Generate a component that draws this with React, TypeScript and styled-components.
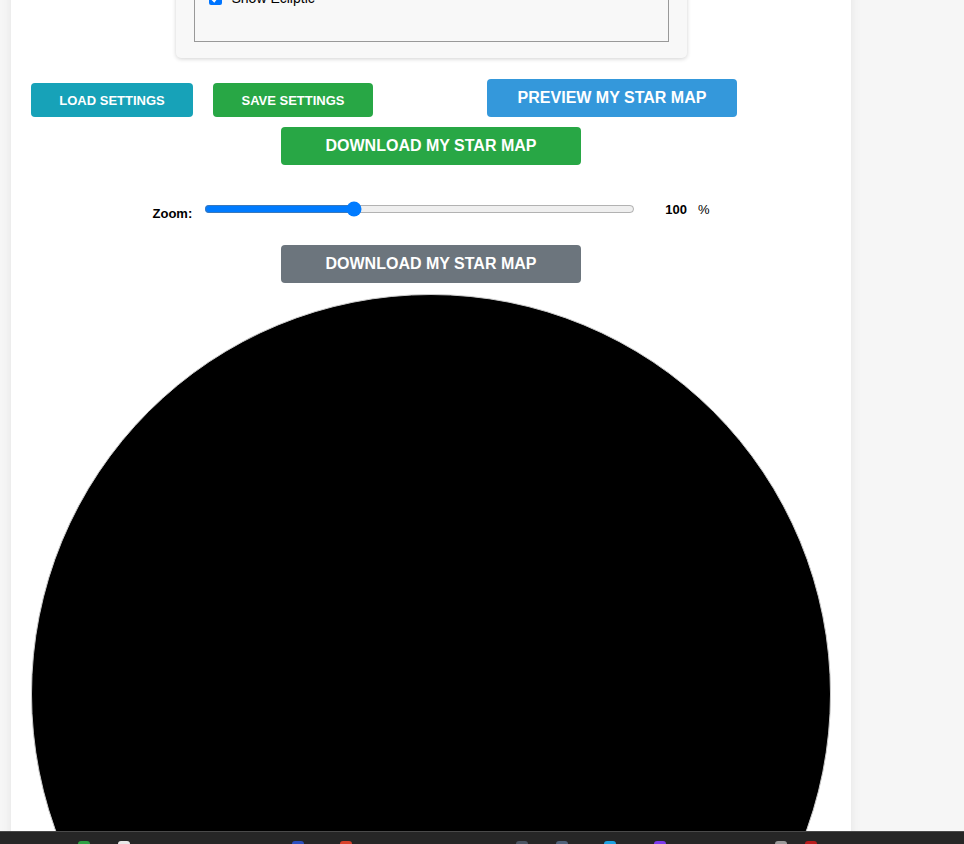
import React, { useState } from "react";
import styled, { createGlobalStyle } from "styled-components";

const GlobalStyle = createGlobalStyle`
  body {
    margin: 0;
    background: #f6f6f6;
    font-family: "Liberation Sans", Arial, sans-serif;
    overflow: hidden;
  }
`;

const Container = styled.div`
  width: 800px;
  margin: -121px 0 0 11px;
  padding: 20px 20px 40px;
  background: #fff;
  box-shadow: 0 0 10px rgba(0, 0, 0, 0.08);
`;

const SettingsPanel = styled.div`
  width: 475px;
  margin: 0 auto 21px;
  padding: 18px 18px 16px;
  background: #f8f8f8;
  border-radius: 5px;
  box-shadow: 0 1px 4px rgba(0, 0, 0, 0.18);
`;

const OptionsBox = styled.div`
  border: 1px solid #999;
  padding: 10px 14px 33px;
`;

const OptionRow = styled.label`
  display: flex;
  align-items: center;
  gap: 10px;
  height: 20px;
  font-size: 14px;
  color: #000;

  input {
    margin: 0;
    width: 13px;
    height: 13px;
    accent-color: #0075ff;
  }
`;

const ButtonRow = styled.div`
  display: flex;
  align-items: flex-end;
  gap: 20px;
`;

const Button = styled.button<{ $bg: string; $w: number; $big?: boolean; $shift?: boolean }>`
  width: ${({ $w }) => $w}px;
  height: ${({ $big }) => ($big ? 38 : 34)}px;
  margin-left: ${({ $shift }) => ($shift ? "94px" : "0")};
  background: ${({ $bg }) => $bg};
  color: #fff;
  border: none;
  border-radius: 4px;
  font-family: "Liberation Sans", Arial, sans-serif;
  font-weight: bold;
  font-size: ${({ $big }) => ($big ? 16 : 13)}px;
  text-transform: uppercase;
  cursor: pointer;
  padding: 0;
`;

const CenterRow = styled.div<{ $top: number }>`
  display: flex;
  justify-content: center;
  margin-top: ${({ $top }) => $top}px;
`;

const ZoomRow = styled.div`
  display: flex;
  justify-content: center;
  align-items: center;
  margin-top: 33px;
  height: 22px;
`;

const ZoomLabel = styled.span`
  font-size: 13px;
  font-weight: bold;
  margin-top: 9px;
  margin-right: 12px;
`;

const Slider = styled.input`
  width: 431px;
  margin: 0;
  accent-color: #007bff;
`;

const ZoomValue = styled.span`
  font-size: 13px;
  font-weight: bold;
  margin-left: 30px;
  padding: 0 6px 0 0;
`;

const Percent = styled.span`
  font-size: 13px;
  margin-left: 5px;
`;

const StarMap = styled.div`
  width: 798px;
  height: 798px;
  margin-top: 11px;
  border: 1px solid #ccc;
  border-radius: 50%;
  background: #000;
`;

const Taskbar = styled.div`
  position: fixed;
  left: 0;
  right: 0;
  bottom: 0;
  height: 12px;
  background: #262626;
  border-top: 1px solid #4a4a4a;
  overflow: hidden;
`;

const TrayIcon = styled.span<{ $x: number; $c: string }>`
  position: absolute;
  left: ${({ $x }) => $x}px;
  top: 9px;
  width: 12px;
  height: 8px;
  border-radius: 3px;
  background: ${({ $c }) => $c};
`;

const trayIcons = [
  { x: 78, c: "#2ea043" },
  { x: 118, c: "#e8e8e8" },
  { x: 292, c: "#2b4fbf" },
  { x: 340, c: "#d9412b" },
  { x: 516, c: "#4b5563" },
  { x: 556, c: "#50627a" },
  { x: 604, c: "#1ba1e2" },
  { x: 654, c: "#7c3aed" },
  { x: 775, c: "#9a9a9a" },
  { x: 805, c: "#b91c1c" },
];

const App = () => {
  const [zoom, setZoom] = useState(100);

  return (
    <>
      <GlobalStyle />
      <Container>
        <SettingsPanel>
          <OptionsBox>
            <OptionRow>
              <input type="checkbox" defaultChecked /> Show Constellations
            </OptionRow>
            <OptionRow>
              <input type="checkbox" defaultChecked /> Show Constellation Names
            </OptionRow>
            <OptionRow>
              <input type="checkbox" defaultChecked /> Show Grid
            </OptionRow>
            <OptionRow>
              <input type="checkbox" defaultChecked /> Show Ecliptic
            </OptionRow>
          </OptionsBox>
        </SettingsPanel>

        <ButtonRow>
          <Button $bg="#17a2b8" $w={162}>Load Settings</Button>
          <Button $bg="#28a745" $w={160}>Save Settings</Button>
          <Button $bg="#3498db" $w={250} $big $shift>Preview My Star Map</Button>
        </ButtonRow>

        <CenterRow $top={10}>
          <Button $bg="#28a745" $w={300} $big>
            Download My Star Map
          </Button>
        </CenterRow>

        <ZoomRow>
          <ZoomLabel>Zoom:</ZoomLabel>
          <Slider
            type="range"
            min={25}
            max={245}
            value={zoom}
            onChange={(e) => setZoom(Number(e.target.value))}
          />
          <ZoomValue>{zoom}</ZoomValue>
          <Percent>%</Percent>
        </ZoomRow>

        <CenterRow $top={25}>
          <Button $bg="#6c757d" $w={300} $big>
            Download My Star Map
          </Button>
        </CenterRow>

        <StarMap />
      </Container>
      <Taskbar>
        {trayIcons.map((t) => (
          <TrayIcon key={t.x} $x={t.x} $c={t.c} />
        ))}
      </Taskbar>
    </>
  );
};

export default App;
